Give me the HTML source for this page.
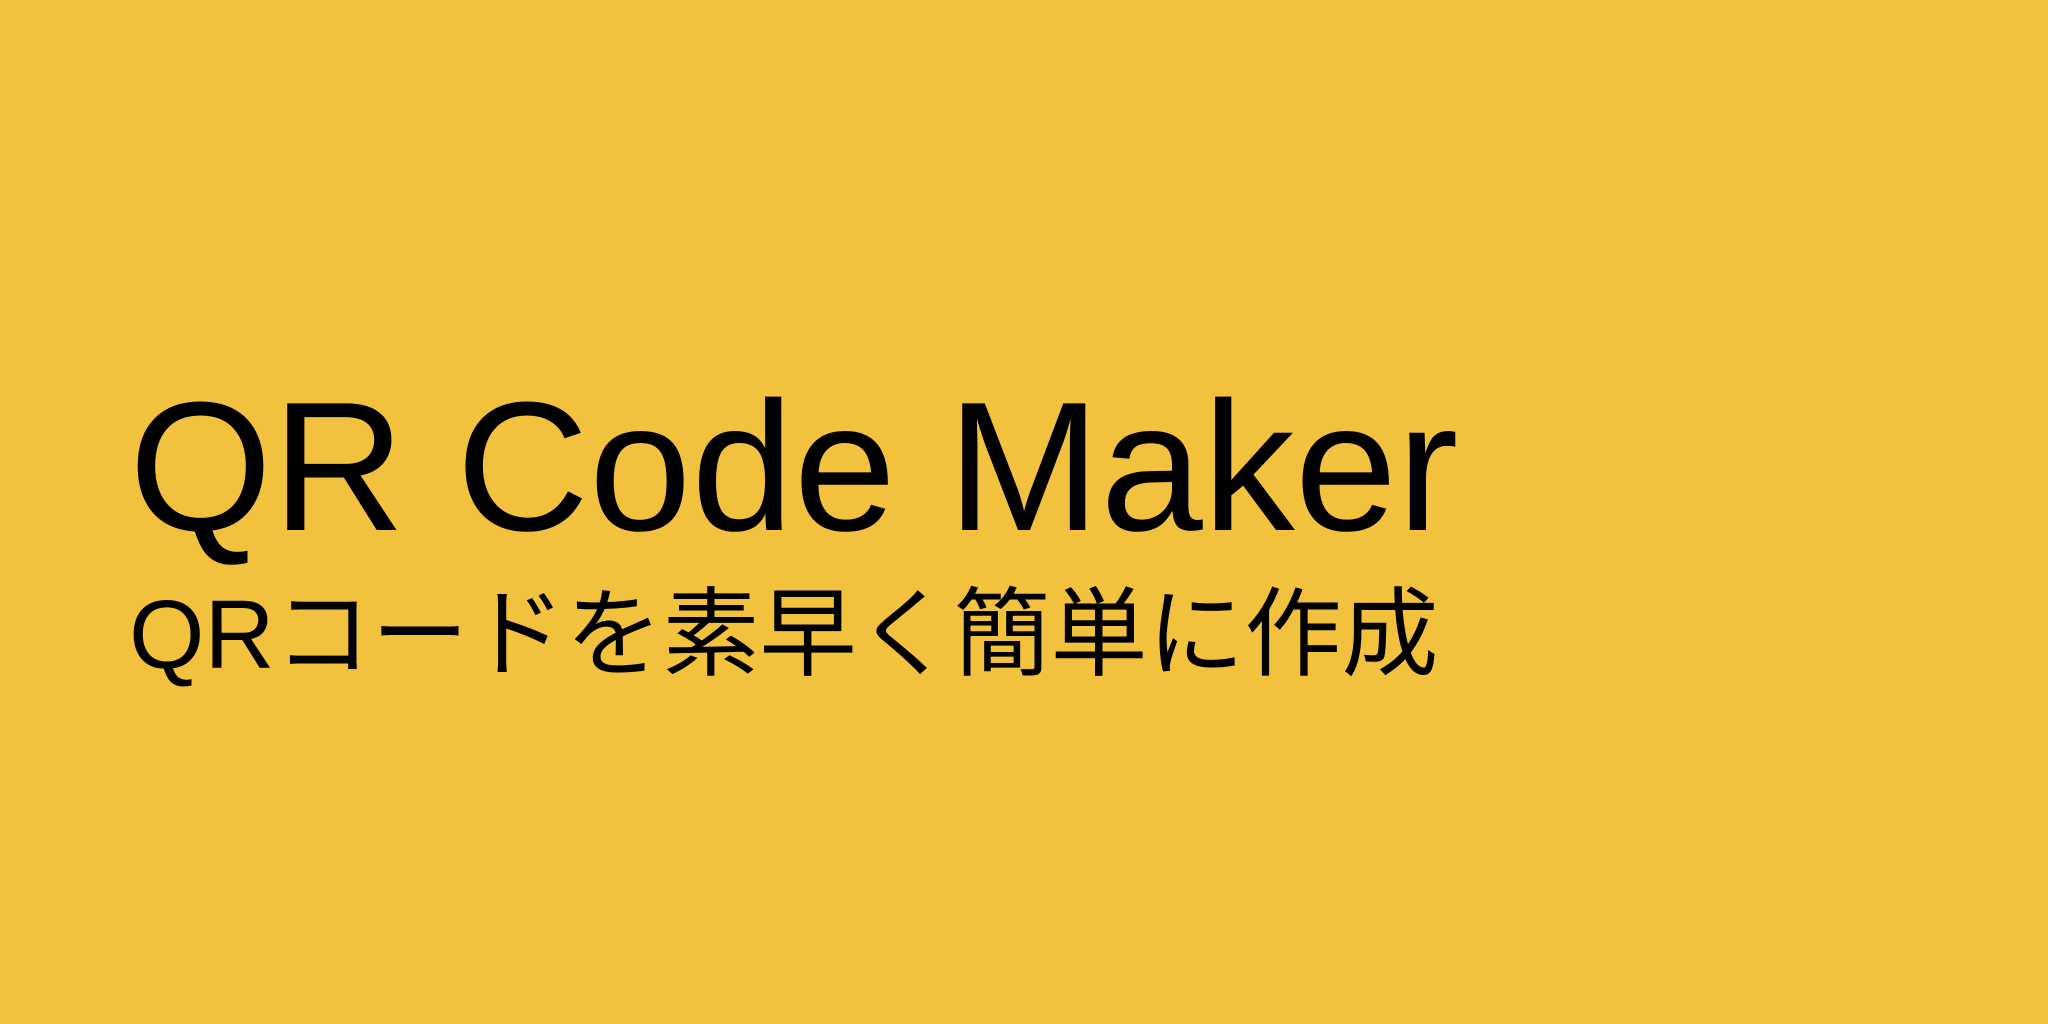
<!DOCTYPE html>
<html><head><meta charset="utf-8"><style>
html,body{margin:0;padding:0}
body{width:2048px;height:1024px;background:#F2C13D;position:relative;overflow:hidden}
.t{position:absolute;left:129px;top:374px;font-family:"Liberation Sans",sans-serif;font-size:184px;line-height:184px;color:#000;white-space:nowrap}
.s{position:absolute;left:129px;top:586px;font-family:"Liberation Sans","Noto Sans CJK JP",sans-serif;font-size:97px;line-height:97px;color:#000;white-space:nowrap}
</style></head><body>
<div class="t">QR Code Maker</div>
<div class="s">QRコードを素早く簡単に作成</div>
</body></html>
